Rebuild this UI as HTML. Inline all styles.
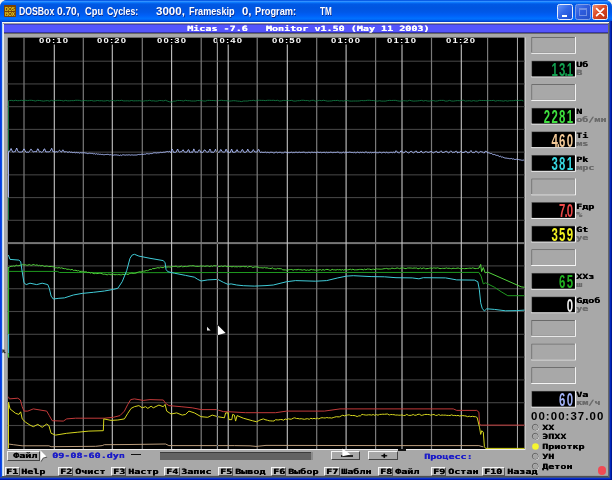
<!DOCTYPE html>
<html lang="ru"><head><meta charset="utf-8"><title>DOSBox 0.70 - TM</title>
<style>
html,body{margin:0;padding:0;}
html{background:#f4f3ee;}
body{width:612px;height:480px;position:relative;overflow:hidden;font-family:"Liberation Sans",sans-serif;}
.abs{position:absolute;}
#win{will-change:transform;position:absolute;left:0;top:0;width:612px;height:480px;background:#0a48dc;border-radius:7px 7px 0 0;overflow:hidden;}
#tb{position:absolute;left:0;top:0;width:612px;height:22px;background:linear-gradient(to bottom,#0a5ce6 0%,#0a5ce6 2.3%,#3090ff 6.8%,#0c78fc 11.4%,#0462ec 16%,#0058e4 20.5%,#0055e0 36%,#0058e8 55%,#0060f8 70%,#0070ff 84%,#0068f8 88.6%,#0058e8 93.2%,#0040d0 97.7%,#0040d0 100%);}
#tb span{position:absolute;top:4.1px;color:#fff;font-weight:bold;font-size:11.2px;line-height:14px;white-space:pre;text-shadow:0.7px 0.7px 0 #0a2a8a;transform-origin:0 0;}
#icon{position:absolute;left:4.2px;top:5.3px;width:11.6px;height:11.6px;background:#7a4204;border-radius:0.8px;overflow:hidden;}
#icon i{position:absolute;left:0.9px;width:14px;height:5px;font:bold 6.2px/5px "Liberation Sans",sans-serif;color:#ecd620;text-align:left;letter-spacing:-0.2px;font-style:normal;transform-origin:0 0;transform:scaleX(0.76);}
.cb{position:absolute;top:4px;width:16px;height:16px;border-radius:2.4px;box-sizing:border-box;border:0.9px solid #e8eefc;}
#bmin{left:557px;background:linear-gradient(135deg,#6a98f8 0%,#3468e8 45%,#1c4cd0 100%);}
#bmax{left:575px;background:linear-gradient(135deg,#4a7cec 0%,#2e5cdc 45%,#2450c8 100%);border-color:#7f9fe8;}
#bcls{left:592px;background:linear-gradient(135deg,#f09070 0%,#dc4a24 45%,#b83010 100%);}
.ln{position:absolute;}
#client{position:absolute;left:4px;top:24px;width:604px;height:452px;background:#a8a8a8;}
#hdr{position:absolute;left:4px;top:24px;width:604px;height:9px;background:#5454fc;box-sizing:border-box;border-top:1px solid #4040b8;border-bottom:1px solid #3434a4;}
#graph{position:absolute;left:0;top:0;}
.f8{position:absolute;font-family:"DejaVu Sans Mono","Liberation Mono",monospace;font-weight:bold;font-size:7.3px;line-height:11px;white-space:pre;transform-origin:0 0;transform:scaleX(1.379);letter-spacing:0;text-shadow:0.3px 0 0 currentColor;}
.bx{position:absolute;left:531.5px;width:44.2px;height:16.3px;}
.seg{position:absolute;right:1.4px;top:2.2px;font-family:"Liberation Sans",sans-serif;font-weight:bold;font-size:11.4px;line-height:14px;letter-spacing:1.3px;transform-origin:100% 50%;transform:scale(1,1.62);white-space:pre;}
.seg .dp{display:inline-block;width:0;margin-left:-2.25px;margin-right:2.25px;letter-spacing:0;}
.timer{position:absolute;font-family:"Liberation Sans",sans-serif;font-weight:bold;font-size:10.4px;line-height:14px;color:#000;white-space:pre;transform-origin:0 0;transform:scaleX(1.1);letter-spacing:0.97px;}
.rd{position:absolute;width:6.4px;height:6.4px;border-radius:50%;box-sizing:border-box;background:#a4a4a4;border:0.9px solid #555;border-right-color:#eee;border-bottom-color:#eee;}
.rd.on{background:#f4f430;border-color:#d8d840;}
.reddot{position:absolute;left:598px;top:466.2px;width:8.4px;height:8.4px;border-radius:50%;background:#f04a54;}
.btn{position:absolute;box-sizing:border-box;background:#a8a8a8;border-top:1.1px solid #f4f4f4;border-left:1.1px solid #f4f4f4;border-bottom:1.3px solid #444;border-right:1.3px solid #444;}
.key{position:absolute;top:467px;height:9px;box-sizing:border-box;background:#b4b4b4;border-top:1.1px solid #f6f6f6;border-left:1.1px solid #f6f6f6;border-bottom:1.2px solid #555;border-right:1.2px solid #555;}
.sb{position:absolute;left:160px;top:452px;width:151.4px;height:7.6px;background:#626262;border-top:0.9px solid #3c3c3c;box-sizing:border-box;}
.sbe{position:absolute;left:311.4px;top:452px;width:2px;height:7.6px;background:#8c8c8c;}
.hd{position:absolute;top:23.2px;color:#fff;}
.tl{position:absolute;color:#fff;font-family:"Liberation Sans",sans-serif;font-weight:bold;font-size:7.6px;line-height:11px;white-space:pre;transform-origin:0 0;transform:scaleX(1.25);letter-spacing:0.958px;}
</style></head><body>
<div id="win">
<div id="tb">
<div id="icon"><i style="top:1.0px">DOS</i><i style="top:5.9px">BOX</i></div>
<span style="left:19px;transform:scaleX(0.776)" id="t1">DOSBox</span><span style="left:57.4px;transform:scaleX(0.908)" id="t2">0.70,</span><span style="left:85.3px;transform:scaleX(0.832)" id="t3">Cpu</span><span style="left:107.4px;transform:scaleX(0.785)" id="t4">Cycles:</span><span style="left:155.9px;transform:scaleX(1.031)" id="t5">3000,</span><span style="left:189.1px;transform:scaleX(0.814)" id="t6">Frameskip</span><span style="left:241.5px;transform:scaleX(1.012)" id="t7">0,</span><span style="left:255.3px;transform:scaleX(0.828)" id="t8">Program:</span><span style="left:320px;transform:scaleX(0.728)" id="t9">TM</span>
<div class="cb" id="bmin"><div class="abs" style="left:3.6px;top:9.8px;width:5.6px;height:2.2px;background:#fff"></div></div>
<div class="cb" id="bmax"><div class="abs" style="left:3.2px;top:3.4px;width:8.2px;height:7.8px;box-sizing:border-box;border:1px solid #6f8fe6;border-top-width:2px"></div></div>
<div class="cb" id="bcls"><svg class="abs" style="left:0;top:0" width="14" height="14" viewBox="0 0 14 14"><path d="M3.6 3.6 L10.6 10.6 M10.6 3.6 L3.6 10.6" stroke="#fff" stroke-width="1.7" stroke-linecap="round"/></svg></div>
</div>
<div class="ln" style="left:0;top:21px;width:1px;height:459px;background:#0a38e0"></div>
<div class="ln" style="left:1px;top:21px;width:1px;height:459px;background:#0a50e0"></div>
<div class="ln" style="left:2px;top:22px;width:1px;height:455px;background:#c0d4f4"></div>
<div class="ln" style="left:3px;top:22px;width:1px;height:455px;background:#ececec"></div>
<div class="ln" style="left:2px;top:22px;width:607px;height:1px;background:#f8f8f4"></div>
<div class="ln" style="left:3px;top:23px;width:606px;height:1px;background:#9c9ca2"></div>
<div id="client"></div>
<div class="ln" style="left:4px;top:33px;width:604px;height:1px;background:#6a6a66"></div>
<div class="ln" style="left:4px;top:475px;width:604px;height:1px;background:#9c9c9c"></div>
<div class="ln" style="left:2px;top:476px;width:607px;height:1px;background:#505050"></div>
<div class="ln" style="left:0px;top:477px;width:612px;height:1px;background:#3a5080"></div>
<div class="ln" style="left:0px;top:478px;width:612px;height:1px;background:#0a30d0"></div>
<div class="ln" style="left:0px;top:479px;width:612px;height:1px;background:#0018a0"></div>
<div class="ln" style="left:608px;top:23px;width:1px;height:454px;background:#686868"></div>
<div class="ln" style="left:609px;top:21px;width:1px;height:457px;background:#3a4c90"></div>
<div class="ln" style="left:610px;top:21px;width:1px;height:458px;background:#0028c0"></div>
<div class="ln" style="left:611px;top:21px;width:1px;height:459px;background:#001890"></div>
<div id="hdr"></div>
<span class="f8 hd" style="left:187px">Micas -7.6   Monitor v1.50 (May 11 2003)</span>
<svg id="graph" width="612" height="480" viewBox="0 0 612 480">
<rect x="7.7" y="37.5" width="517.6999999999999" height="412.4" fill="#f8f8f8"/>
<rect x="7.7" y="37.5" width="516.8499999999999" height="411.5" fill="#000"/>
<rect x="7.7" y="60.65" width="516.8499999999999" height="1.1" fill="#434343"/>
<rect x="7.7" y="83.38" width="516.8499999999999" height="1.1" fill="#434343"/>
<rect x="7.7" y="106.11" width="516.8499999999999" height="1.1" fill="#434343"/>
<rect x="7.7" y="128.84" width="516.8499999999999" height="1.1" fill="#434343"/>
<rect x="7.7" y="151.57" width="516.8499999999999" height="1.1" fill="#434343"/>
<rect x="7.7" y="174.30" width="516.8499999999999" height="1.1" fill="#434343"/>
<rect x="7.7" y="197.03" width="516.8499999999999" height="1.1" fill="#434343"/>
<rect x="7.7" y="219.76" width="516.8499999999999" height="1.1" fill="#434343"/>
<rect x="7.7" y="242.10" width="516.8499999999999" height="2" fill="#767676"/>
<rect x="7.7" y="265.35" width="516.8499999999999" height="1.1" fill="#434343"/>
<rect x="7.7" y="288.15" width="516.8499999999999" height="1.1" fill="#434343"/>
<rect x="7.7" y="310.95" width="516.8499999999999" height="1.1" fill="#434343"/>
<rect x="7.7" y="333.75" width="516.8499999999999" height="1.1" fill="#434343"/>
<rect x="7.7" y="356.55" width="516.8499999999999" height="1.1" fill="#434343"/>
<rect x="7.7" y="379.35" width="516.8499999999999" height="1.1" fill="#434343"/>
<rect x="7.7" y="402.15" width="516.8499999999999" height="1.1" fill="#434343"/>
<rect x="7.7" y="424.95" width="516.8499999999999" height="1.1" fill="#434343"/>
<rect x="23.40" y="37.5" width="1.2" height="411.5" fill="#7a7a7a"/>
<rect x="82.70" y="37.5" width="1.2" height="411.5" fill="#7a7a7a"/>
<rect x="141.70" y="37.5" width="1.2" height="411.5" fill="#7a7a7a"/>
<rect x="200.60" y="37.5" width="1.2" height="411.5" fill="#7a7a7a"/>
<rect x="256.60" y="37.5" width="1.2" height="411.5" fill="#7a7a7a"/>
<rect x="316.10" y="37.5" width="1.2" height="411.5" fill="#7a7a7a"/>
<rect x="375.00" y="37.5" width="1.2" height="411.5" fill="#7a7a7a"/>
<rect x="430.90" y="37.5" width="1.2" height="411.5" fill="#7a7a7a"/>
<rect x="487.00" y="37.5" width="1.2" height="411.5" fill="#7a7a7a"/>
<rect x="53.75" y="44.5" width="1.1" height="404.5" fill="#c4c4c4"/>
<rect x="111.75" y="44.5" width="1.1" height="404.5" fill="#c4c4c4"/>
<rect x="171.05" y="44.5" width="1.1" height="404.5" fill="#c4c4c4"/>
<rect x="227.65" y="44.5" width="1.1" height="404.5" fill="#c4c4c4"/>
<rect x="286.75" y="44.5" width="1.1" height="404.5" fill="#c4c4c4"/>
<rect x="345.55" y="44.5" width="1.1" height="404.5" fill="#c4c4c4"/>
<rect x="401.45" y="44.5" width="1.1" height="404.5" fill="#c4c4c4"/>
<rect x="460.75" y="44.5" width="1.1" height="404.5" fill="#c4c4c4"/>
<rect x="516.95" y="37.5" width="0.9" height="411.5" fill="#c0c0c0"/>
<polyline points="8.5,220.0 8.5,100.7 9.5,100.5 11.5,100.4 13.5,100.8 15.5,100.3 17.5,100.7 19.5,100.6 21.5,100.3 23.5,100.7 25.5,100.3 27.5,100.6 29.5,100.3 31.5,100.3 33.5,100.6 35.5,101.0 37.5,100.4 39.5,100.5 41.5,100.8 43.5,101.1 45.5,100.8 47.5,100.6 49.5,101.1 51.5,100.3 53.5,101.0 55.5,100.5 57.5,100.4 59.5,100.4 61.5,100.5 63.5,101.0 65.5,100.4 67.5,100.8 69.5,100.8 71.5,100.6 73.5,100.7 75.5,100.3 77.5,100.3 79.5,100.4 81.5,100.9 83.5,100.6 85.5,100.5 87.5,100.8 89.5,100.7 91.5,100.5 93.5,101.0 95.5,100.9 97.5,100.5 99.5,100.8 101.5,100.7 103.5,101.0 105.5,100.9 107.5,100.5 109.5,101.1 111.5,100.4 113.5,100.6 115.5,100.9 117.5,100.4 119.5,100.7 121.5,100.3 123.5,100.9 125.5,100.9 127.5,100.8 129.5,101.0 131.5,100.5 133.5,100.9 135.5,100.8 137.5,100.8 139.5,100.7 141.5,101.0 143.5,101.1 145.5,100.7 147.5,100.8 149.5,100.3 151.5,100.9 153.5,100.8 155.5,101.1 157.5,101.0 159.5,100.5 161.5,100.6 163.5,100.9 165.5,100.3 167.5,101.1 169.5,101.8 171.5,102.1 173.5,101.2 175.5,101.1 177.5,100.4 179.5,100.5 181.5,100.6 183.5,101.0 185.5,100.3 187.5,100.7 189.5,100.7 191.5,101.0 193.5,101.0 195.5,101.0 197.5,100.5 199.5,100.6 201.5,100.6 203.5,101.0 205.5,101.1 207.5,100.4 209.5,100.4 211.5,100.5 213.5,100.5 215.5,100.7 217.5,100.8 219.5,100.5 221.5,100.3 223.5,100.6 225.5,100.6 227.5,100.8 229.5,101.1 231.5,100.9 233.5,100.7 235.5,100.8 237.5,101.1 239.5,101.2 241.5,101.6 243.5,101.0 245.5,101.0 247.5,101.0 249.5,100.6 251.5,100.6 253.5,100.3 255.5,100.8 257.5,100.3 259.5,100.3 261.5,100.4 263.5,100.4 265.5,100.6 267.5,100.3 269.5,100.3 271.5,100.4 273.5,100.3 275.5,100.6 277.5,100.3 279.5,101.0 281.5,100.8 283.5,100.4 285.5,100.5 287.5,100.6 289.5,100.6 291.5,100.4 293.5,101.0 295.5,101.1 297.5,100.7 299.5,100.7 301.5,100.3 303.5,100.3 305.5,100.6 307.5,100.5 309.5,101.0 311.5,100.4 313.5,100.3 315.5,101.1 317.5,100.7 319.5,100.4 321.5,100.7 323.5,100.3 325.5,100.7 327.5,101.1 329.5,101.0 331.5,100.9 333.5,100.5 335.5,100.6 337.5,100.4 339.5,100.9 341.5,100.7 343.5,101.0 345.5,100.5 347.5,100.5 349.5,101.0 351.5,101.1 353.5,101.0 355.5,101.0 357.5,101.0 359.5,100.9 361.5,100.5 363.5,100.7 365.5,100.6 367.5,100.3 369.5,100.3 371.5,100.5 373.5,100.5 375.5,100.9 377.5,101.1 379.5,100.7 381.5,101.1 383.5,101.1 385.5,101.1 387.5,100.6 389.5,100.4 391.5,100.5 393.5,100.4 395.5,100.4 397.5,100.8 399.5,101.1 401.5,101.0 403.5,100.7 405.5,100.8 407.5,101.0 409.5,100.3 411.5,100.8 413.5,101.1 415.5,101.0 417.5,100.9 419.5,100.7 421.5,100.4 423.5,101.0 425.5,100.5 427.5,101.0 429.5,101.1 431.5,100.6 433.5,100.6 435.5,101.1 437.5,100.9 439.5,100.4 441.5,100.4 443.5,100.4 445.5,101.1 447.5,101.0 449.5,100.4 451.5,101.0 453.5,101.1 455.5,100.8 457.5,100.6 459.5,100.7 461.5,100.4 463.5,100.3 465.5,101.1 467.5,100.8 469.5,100.7 471.5,101.1 473.5,100.6 475.5,101.0 477.5,101.0 479.5,100.4 481.5,100.5 483.5,100.5 485.5,100.5 487.5,100.8 489.5,100.5 491.5,100.6 493.5,100.4 495.5,101.1 497.5,100.6 499.5,100.7 501.5,100.8 503.5,101.1 505.5,100.6 507.5,101.1 509.5,100.7 511.5,100.7 513.5,100.7 515.5,100.3 517.5,100.6 519.5,100.4 521.5,100.3 523.5,101.0" fill="none" stroke="#127a44" stroke-width="0.9" stroke-linejoin="round" opacity="1"/>
<polyline points="8.5,197.5 8.5,151.3 9.0,151.6 9.7,151.3 10.4,149.8 11.1,148.5 11.8,150.0 12.5,151.8 13.2,151.9 13.9,152.1 14.6,151.6 15.3,151.6 16.0,149.7 16.7,148.0 17.4,150.1 18.1,151.5 18.8,151.9 19.5,152.1 20.2,152.2 20.9,151.9 21.6,152.0 22.3,151.9 23.0,150.6 23.7,149.1 24.4,149.1 25.1,150.8 25.8,151.9 26.5,152.3 27.2,152.1 27.9,152.2 28.6,152.3 29.3,151.7 30.0,150.6 30.7,149.3 31.4,149.4 32.1,150.5 32.8,151.6 33.5,151.9 34.2,151.6 34.9,151.7 35.6,151.6 36.3,151.9 37.0,150.3 37.7,148.8 38.4,149.3 39.1,151.5 39.8,152.0 40.5,151.6 41.2,152.2 41.9,152.3 42.6,151.7 43.3,151.2 44.0,149.1 44.7,148.9 45.4,151.0 46.1,152.2 46.8,151.6 47.5,151.8 48.2,151.9 48.9,151.8 49.6,151.7 50.3,150.9 51.0,149.6 51.7,148.3 52.4,150.4 53.1,151.9 53.8,151.5 54.5,151.8 55.2,152.0 55.9,151.9 56.6,151.6 57.3,152.3 58.0,151.5 58.7,150.8 59.4,150.2 60.1,151.2 60.8,151.5 61.5,152.1 62.2,150.8 62.9,149.8 63.6,150.7 64.3,152.0 65.0,152.2 65.7,151.7 66.4,151.6 67.1,152.3 67.8,152.1 68.5,152.2 69.2,151.8 69.9,151.8 70.6,152.4 71.3,152.2 72.0,152.0 72.7,152.7 73.4,152.5 74.1,152.7 74.8,152.2 75.5,152.8 76.2,152.2 76.9,152.9 77.6,152.7 78.3,152.6 79.0,152.8 79.7,153.2 80.4,152.7 81.1,152.6 81.8,153.0 82.5,152.8 83.2,152.8 83.9,152.8 84.6,152.8 85.3,153.0 86.0,153.1 86.7,153.2 87.4,153.6 88.1,153.2 88.8,153.5 89.5,153.2 90.2,153.4 90.9,153.2 91.6,153.4 92.3,153.3 93.0,153.9 93.7,153.8 94.4,153.6 95.1,153.9 95.8,154.3 96.5,153.7 97.2,154.3 97.9,154.0 98.6,154.1 99.3,154.4 100.0,154.1 100.7,154.3 101.4,154.5 102.1,154.7 102.8,154.3 103.5,154.7 104.2,154.7 104.9,154.7 105.6,154.5 106.3,154.5 107.0,154.3 107.7,154.4 108.4,154.4 109.1,155.0 109.8,154.7 110.5,154.7 111.2,154.6 111.9,155.3 112.6,155.4 113.3,155.2 114.0,154.9 114.7,154.9 115.4,154.9 116.1,155.1 116.8,154.8 117.5,155.1 118.2,154.9 118.9,155.5 119.6,155.5 120.3,155.1 121.0,154.9 121.7,155.5 122.4,154.9 123.1,155.0 123.8,154.7 124.5,155.0 125.2,155.1 125.9,155.1 126.6,154.9 127.3,155.1 128.0,154.7 128.7,154.9 129.4,154.8 130.1,155.3 130.8,155.0 131.5,154.9 132.2,155.0 132.9,154.9 133.6,155.1 134.3,155.0 135.0,155.1 135.7,155.0 136.4,155.0 137.1,155.0 137.8,154.6 138.5,154.5 139.2,154.9 139.9,154.2 140.6,154.6 141.3,154.4 142.0,153.9 142.7,154.5 143.4,154.4 144.1,154.2 144.8,154.2 145.5,154.2 146.2,153.6 146.9,153.8 147.6,153.7 148.3,153.9 149.0,153.8 149.7,153.8 150.4,153.5 151.1,153.7 151.8,153.5 152.5,153.4 153.2,153.0 153.9,152.8 154.6,152.8 155.3,152.9 156.0,152.6 156.7,153.1 157.4,152.8 158.1,152.8 158.8,152.8 159.5,152.7 160.2,152.5 160.9,152.1 161.6,152.6 162.3,152.5 163.0,152.3 163.7,152.2 164.4,152.3 165.1,151.7 165.8,152.2 166.5,151.7 167.2,151.5 167.9,151.6 168.6,151.9 169.3,151.4 170.0,151.8 170.7,152.6 171.4,150.9 172.1,149.1 172.8,150.4 173.5,152.3 174.2,152.4 174.9,152.3 175.6,152.3 176.3,151.9 177.0,150.1 177.7,149.0 178.4,151.1 179.1,152.0 179.8,152.3 180.5,151.8 181.2,151.8 181.9,151.5 182.6,150.1 183.3,149.8 184.0,151.6 184.7,152.0 185.4,152.2 186.1,152.2 186.8,152.2 187.5,150.9 188.2,149.7 188.9,149.9 189.6,152.3 190.3,152.5 191.0,151.8 191.7,152.2 192.4,152.5 193.1,151.1 193.8,148.9 194.5,150.5 195.2,152.0 195.9,152.6 196.6,152.0 197.3,152.3 198.0,151.7 198.7,150.2 199.4,149.8 200.1,150.9 200.8,152.5 201.5,152.2 202.2,152.5 202.9,152.4 203.6,151.2 204.3,150.0 205.0,149.9 205.7,151.3 206.4,151.8 207.1,152.2 207.8,152.2 208.5,152.0 209.2,150.6 209.9,149.0 210.6,150.3 211.3,152.5 212.0,151.8 212.7,152.4 213.4,152.5 214.1,151.9 214.8,150.8 215.5,149.3 216.2,151.3 216.9,152.0 217.6,152.1 218.3,152.1 219.0,152.6 219.7,151.8 220.4,149.8 221.1,149.6 221.8,151.3 222.5,151.8 223.2,151.9 223.9,152.5 224.6,152.0 225.3,151.5 226.0,149.2 226.7,150.0 227.4,152.0 228.1,152.0 228.8,152.1 229.5,152.6 230.2,152.5 230.9,150.9 231.6,149.0 232.3,151.0 233.0,152.6 233.7,152.2 234.4,152.4 235.1,151.8 235.8,152.1 236.5,150.1 237.2,149.6 237.9,151.3 238.6,152.0 239.3,151.8 240.0,152.5 240.7,151.9 241.4,151.4 242.1,149.5 242.8,149.8 243.5,151.9 244.2,152.6 244.9,152.0 245.6,152.3 246.3,152.0 247.0,151.0 247.7,149.1 248.4,150.2 249.1,151.9 249.8,152.0 250.5,152.5 251.2,152.2 251.9,152.0 252.6,150.7 253.3,149.6 254.0,150.9 254.7,151.9 255.4,152.0 256.1,151.9 256.8,152.1 257.5,151.4 258.2,149.7 258.9,149.5 259.6,151.5 260.3,152.5 261.0,152.4 261.7,152.1 262.4,152.4 263.1,152.5 263.8,152.4 264.5,152.4 265.2,152.1 265.9,152.3 266.6,152.9 267.3,152.2 268.0,152.5 268.7,152.6 269.4,152.8 270.1,152.3 270.8,152.3 271.5,152.3 272.2,152.4 272.9,152.5 273.6,152.9 274.3,152.8 275.0,152.8 275.7,152.1 276.4,152.1 277.1,152.7 277.8,152.8 278.5,152.5 279.2,152.6 279.9,152.1 280.6,152.4 281.3,152.8 282.0,152.8 282.7,152.8 283.4,152.9 284.1,152.3 284.8,152.2 285.5,152.2 286.2,152.5 286.9,152.6 287.6,152.9 288.3,152.7 289.0,152.6 289.7,152.7 290.4,152.5 291.1,152.5 291.8,152.1 292.5,152.7 293.2,152.3 293.9,152.8 294.6,152.6 295.3,152.3 296.0,152.2 296.7,152.3 297.4,152.6 298.1,152.7 298.8,152.2 299.5,152.2 300.2,152.5 300.9,152.6 301.6,152.4 302.3,152.3 303.0,152.6 303.7,152.1 304.4,152.3 305.1,152.5 305.8,152.9 306.5,152.6 307.2,152.8 307.9,152.5 308.6,152.3 309.3,152.3 310.0,152.9 310.7,152.7 311.4,152.3 312.1,152.1 312.8,152.5 313.5,152.6 314.2,152.4 314.9,152.3 315.6,152.6 316.3,152.8 317.0,152.3 317.7,152.1 318.4,152.4 319.1,152.4 319.8,152.6 320.5,152.3 321.2,152.7 321.9,152.7 322.6,152.5 323.3,152.3 324.0,152.9 324.7,152.3 325.4,152.8 326.1,152.3 326.8,152.3 327.5,152.7 328.2,152.3 328.9,152.9 329.6,152.5 330.3,152.2 331.0,152.3 331.7,152.4 332.4,152.6 333.1,152.9 333.8,152.2 334.5,152.4 335.2,152.3 335.9,152.9 336.6,152.2 337.3,152.1 338.0,152.1 338.7,152.4 339.4,152.8 340.1,152.8 340.8,152.7 341.5,152.9 342.2,152.8 342.9,152.4 343.6,152.2 344.3,152.8 345.0,152.7 345.7,152.1 346.4,152.6 347.1,152.4 347.8,152.4 348.5,152.4 349.2,152.2 349.9,152.1 350.6,152.3 351.3,152.4 352.0,152.9 352.7,152.2 353.4,152.9 354.1,152.3 354.8,152.4 355.5,152.8 356.2,152.8 356.9,152.4 357.6,152.1 358.3,152.5 359.0,152.4 359.7,152.8 360.4,152.3 361.1,152.4 361.8,152.8 362.5,152.1 363.2,152.4 363.9,152.7 364.6,152.7 365.3,152.1 366.0,152.1 366.7,152.2 367.4,152.8 368.1,152.3 368.8,152.7 369.5,152.8 370.2,152.4 370.9,152.3 371.6,152.9 372.3,152.6 373.0,152.3 373.7,152.7 374.4,152.4 375.1,152.3 375.8,152.1 376.5,152.7 377.2,152.8 377.9,152.6 378.6,152.9 379.3,152.1 380.0,152.3 380.7,152.5 381.4,152.9 382.1,152.9 382.8,152.4 383.5,152.3 384.2,152.4 384.9,152.5 385.6,152.8 386.3,152.2 387.0,152.7 387.7,152.7 388.4,152.8 389.1,152.7 389.8,152.6 390.5,152.4 391.2,152.4 391.9,152.4 392.6,152.7 393.3,152.2 394.0,152.3 394.7,152.7 395.4,152.3 396.1,150.7 396.8,151.4 397.5,152.5 398.2,152.5 398.9,153.0 399.6,152.7 400.3,152.0 401.0,150.7 401.7,151.3 402.4,152.1 403.1,152.6 403.8,152.8 404.5,152.5 405.2,151.5 405.9,150.9 406.6,151.6 407.3,152.4 408.0,152.8 408.7,152.9 409.4,152.7 410.1,151.6 410.8,151.4 411.5,151.3 412.2,152.2 412.9,152.5 413.6,152.8 414.3,152.4 415.0,151.8 415.7,151.0 416.4,151.0 417.1,152.4 417.8,152.7 418.5,152.5 419.2,152.5 419.9,152.5 420.6,151.3 421.3,151.0 422.0,152.2 422.7,152.7 423.4,153.0 424.1,152.3 424.8,152.2 425.5,151.7 426.2,151.4 426.9,152.2 427.6,152.2 428.3,152.4 429.0,152.3 429.7,152.0 430.4,151.9 431.1,151.1 431.8,152.1 432.5,152.4 433.2,152.9 433.9,152.6 434.6,152.2 435.3,151.9 436.0,151.3 436.7,151.3 437.4,152.5 438.1,152.7 438.8,152.4 439.5,152.4 440.2,151.5 440.9,150.8 441.6,151.3 442.3,152.4 443.0,152.7 443.7,152.4 444.4,152.2 445.1,151.7 445.8,151.3 446.5,151.2 447.2,152.0 447.9,152.4 448.6,152.8 449.3,152.6 450.0,151.6 450.7,150.9 451.4,151.2 452.1,152.1 452.8,152.7 453.5,152.3 454.2,152.3 454.9,152.2 455.6,151.3 456.3,151.0 457.0,151.8 457.7,153.0 458.4,152.4 459.1,152.7 459.8,152.1 460.5,151.4 461.2,151.4 461.9,152.3 462.6,152.5 463.3,152.4 464.0,152.8 464.7,152.0 465.4,151.1 466.1,151.3 466.8,151.7 467.5,152.8 468.2,152.5 468.9,152.9 469.6,152.4 470.3,151.4 471.0,150.5 471.7,151.7 472.4,152.5 473.1,152.9 473.8,152.3 474.5,152.6 475.2,151.6 475.9,151.0 476.6,151.3 477.3,152.1 478.0,152.6 478.7,152.9 479.4,152.3 480.1,151.8 480.8,151.4 481.5,151.8 482.2,151.9 482.9,152.3 483.6,153.0 484.3,153.0 485.0,151.9 485.7,150.9 486.4,151.7 487.1,152.0 487.8,152.9 488.5,152.8 489.2,153.2 489.9,152.9 490.6,153.6 491.3,153.4 492.0,153.8 492.7,154.4 493.4,154.6 494.1,154.3 494.8,154.6 495.5,155.0 496.2,155.3 496.9,155.4 497.6,155.4 498.3,155.7 499.0,156.3 499.7,156.6 500.4,156.2 501.1,156.8 501.8,157.2 502.5,156.8 503.2,157.6 503.9,157.3 504.6,157.9 505.3,158.0 506.0,158.3 506.7,158.1 507.4,158.3 508.1,158.5 508.8,158.4 509.5,158.7 510.2,158.6 510.9,158.7 511.6,158.5 512.3,159.0 513.0,159.0 513.7,158.9 514.4,159.4 515.1,159.5 515.8,159.4 516.5,159.2 517.2,159.6 517.9,159.4 518.6,159.5 519.3,159.8 520.0,159.6 520.7,160.0 521.4,160.2 522.1,159.9 522.8,160.5 523.5,160.1 524.2,160.7" fill="none" stroke="#a6b6f2" stroke-width="1.0" stroke-linejoin="round" opacity="1"/>
<rect x="7.9" y="267" width="1.2" height="67" fill="#30b030"/>
<rect x="7.9" y="334" width="1.2" height="19.2" fill="#40c0d0"/>
<rect x="7.9" y="353.2" width="1.2" height="4.4" fill="#40c040"/>
<polyline points="8.5,271.4 57.5,271.4 59.5,272.5 130.0,272.7 250.0,272.5 478.9,272.4 481.1,276.1 483.3,283.9 485.6,282.8 494.4,287.2 501.1,291.7 507.8,295.7 524.5,295.7" fill="none" stroke="#1f9a1f" stroke-width="1.0" stroke-linejoin="round" opacity="1"/>
<polyline points="8.4,267.5 9.7,266.9 11.0,266.2 12.3,266.3 13.6,265.9 14.9,266.3 16.2,265.2 17.5,265.7 18.8,265.7 20.1,265.2 21.4,265.0 22.7,264.3 24.0,265.1 25.3,264.7 26.6,265.2 27.9,265.2 29.2,264.5 30.5,265.1 31.8,265.3 33.1,264.5 34.4,264.8 35.7,265.3 37.0,264.8 38.3,265.7 39.6,265.3 40.9,266.0 42.2,265.4 43.5,266.0 44.8,266.5 46.1,266.0 47.4,266.2 48.7,266.6 50.0,266.5 51.3,266.4 52.6,266.7 53.9,266.8 55.2,267.8 56.5,267.7 57.8,268.0 59.1,267.5 60.4,268.2 61.7,267.8 63.0,268.4 64.3,268.7 65.6,268.6 66.9,269.3 68.2,269.2 69.5,269.4 70.8,269.9 72.1,269.3 73.4,270.4 74.7,270.3 76.0,270.3 77.3,270.9 78.6,270.6 79.9,271.5 81.2,271.3 82.5,271.4 83.8,272.0 85.1,271.9 86.4,271.8 87.7,272.6 89.0,272.2 90.3,273.1 91.6,272.6 92.9,273.2 94.2,273.7 95.5,273.4 96.8,273.6 98.1,273.4 99.4,273.3 100.7,273.4 102.0,273.7 103.3,274.3 104.6,274.2 105.9,274.4 107.2,274.9 108.5,274.2 109.8,274.4 111.1,274.9 112.4,274.3 113.7,274.4 115.0,274.8 116.3,274.6 117.6,274.7 118.9,274.5 120.2,274.8 121.5,274.8 122.8,274.3 124.1,274.7 125.4,274.4 126.7,274.0 128.0,274.6 129.3,273.7 130.6,273.4 131.9,273.1 133.2,273.4 134.5,273.4 135.8,273.1 137.1,272.5 138.4,272.1 139.7,271.7 141.0,272.1 142.3,271.6 143.6,271.1 144.9,271.1 146.2,270.5 147.5,270.7 148.8,270.1 150.1,269.3 151.4,269.6 152.7,268.5 154.0,268.7 155.3,268.4 156.6,268.0 157.9,267.6 159.2,268.1 160.5,267.2 161.8,267.5 163.1,267.7 164.4,266.8 165.7,266.8 167.0,267.1 168.3,266.9 169.6,267.0 170.9,267.1 172.2,266.4 173.5,266.5 174.8,266.4 176.1,266.1 177.4,266.9 178.7,266.8 180.0,266.7 181.3,266.0 182.6,266.8 183.9,266.6 185.2,266.3 186.5,266.6 187.8,266.3 189.1,266.0 190.4,265.8 191.7,265.9 193.0,265.7 194.3,266.0 195.6,266.4 196.9,266.3 198.2,266.4 199.5,266.3 200.8,265.9 202.1,266.2 203.4,266.0 204.7,266.4 206.0,266.1 207.3,265.9 208.6,266.2 209.9,266.6 211.2,265.8 212.5,266.5 213.8,265.6 215.1,265.9 216.4,265.8 217.7,266.3 219.0,266.5 220.3,266.4 221.6,266.0 222.9,266.6 224.2,266.0 225.5,266.0 226.8,266.7 228.1,266.4 229.4,266.5 230.7,266.5 232.0,266.9 233.3,266.4 234.6,266.8 235.9,266.7 237.2,266.9 238.5,266.5 239.8,266.8 241.1,266.7 242.4,266.5 243.7,266.4 245.0,266.9 246.3,266.4 247.6,267.3 248.9,266.6 250.2,266.5 251.5,266.7 252.8,267.6 254.1,267.0 255.4,266.9 256.7,266.9 258.0,267.0 259.3,267.7 260.6,267.7 261.9,267.8 263.2,268.0 264.5,267.4 265.8,268.0 267.1,267.8 268.4,268.3 269.7,268.4 271.0,268.6 272.3,267.8 273.6,268.7 274.9,268.9 276.2,269.1 277.5,268.4 278.8,268.7 280.1,268.7 281.4,268.8 282.7,269.8 284.0,269.9 285.3,269.9 286.6,270.2 287.9,270.0 289.2,269.7 290.5,269.5 291.8,269.5 293.1,270.2 294.4,269.6 295.7,269.7 297.0,269.8 298.3,269.4 299.6,269.7 300.9,269.7 302.2,270.1 303.5,269.8 304.8,269.7 306.1,270.4 307.4,269.9 308.7,270.3 310.0,270.0 311.3,269.4 312.6,269.8 313.9,269.8 315.2,270.2 316.5,269.7 317.8,270.1 319.1,269.9 320.4,269.6 321.7,270.3 323.0,269.5 324.3,270.2 325.6,269.6 326.9,269.4 328.2,269.6 329.5,270.1 330.8,270.3 332.1,269.3 333.4,269.8 334.7,269.8 336.0,270.1 337.3,269.5 338.6,269.8 339.9,269.6 341.2,270.1 342.5,269.5 343.8,270.2 345.1,269.5 346.4,269.4 347.7,269.9 349.0,269.6 350.3,269.2 351.6,269.8 352.9,269.2 354.2,269.9 355.5,269.8 356.8,269.8 358.1,269.7 359.4,269.4 360.7,269.4 362.0,269.4 363.3,269.9 364.6,269.1 365.9,269.8 367.2,269.0 368.5,269.1 369.8,269.2 371.1,269.8 372.4,269.3 373.7,269.2 375.0,269.6 376.3,268.9 377.6,269.1 378.9,269.1 380.2,269.2 381.5,269.2 382.8,269.0 384.1,268.7 385.4,268.6 386.7,268.4 388.0,269.0 389.3,268.8 390.6,268.8 391.9,268.1 393.2,268.4 394.5,268.6 395.8,268.4 397.1,267.9 398.4,268.3 399.7,268.7 401.0,268.0 402.3,268.0 403.6,268.1 404.9,268.5 406.2,268.6 407.5,268.0 408.8,268.0 410.1,268.0 411.4,268.1 412.7,268.3 414.0,268.0 415.3,268.1 416.6,268.0 417.9,268.8 419.2,268.5 420.5,267.9 421.8,268.8 423.1,267.9 424.4,268.2 425.7,268.8 427.0,268.6 428.3,268.5 429.6,268.2 430.9,268.0 432.2,268.4 433.5,267.9 434.8,268.0 436.1,268.2 437.4,267.8 438.7,268.2 440.0,268.6 441.3,268.5 442.6,268.3 443.9,268.4 445.2,268.3 446.5,267.9 447.8,268.4 449.1,268.2 450.4,268.5 451.7,268.7 453.0,268.2 454.3,268.4 455.6,268.5 456.9,268.2 458.2,268.0 459.5,268.5 460.8,268.7 462.1,268.6 463.4,268.5 464.7,268.7 466.0,268.5 467.3,268.4 468.6,268.3 469.9,268.1 471.2,268.4 472.5,267.9 473.8,268.2 475.1,268.6 476.4,268.5 477.7,268.4 479.0,268.1 480.7,264.4 481.6,271.7 483.3,267.5 485.1,272.8 487.8,272.1 521.1,286.8 524.5,287.3" fill="none" stroke="#52d23c" stroke-width="1.0" stroke-linejoin="round" opacity="1"/>
<polyline points="8.4,255.0 10.0,259.4 18.9,260.1 20.7,261.7 22.2,271.7 24.0,282.8 26.2,284.6 30.0,283.2 36.7,284.6 42.2,283.2 47.8,284.6 49.3,288.3 51.1,296.1 53.3,299.0 58.9,298.3 64.4,297.9 73.3,295.0 82.2,293.4 93.3,292.3 104.4,291.0 113.3,289.4 117.8,288.3 122.2,281.7 126.7,270.6 130.0,258.3 132.2,255.0 134.5,254.3 138.9,256.1 150.0,258.3 163.3,260.6 165.1,262.8 166.0,269.4 167.8,271.7 174.4,273.2 185.6,275.4 194.4,277.2 197.8,279.4 201.1,281.0 207.8,279.9 217.8,279.4 223.3,282.3 227.8,284.3 231.1,283.9 236.7,285.0 243.3,285.7 254.4,286.1 266.0,285.6 273.3,285.0 286.7,281.7 295.6,280.6 315.6,281.2 326.7,280.6 337.8,277.9 346.7,276.1 353.3,275.7 371.1,276.6 384.4,276.8 396.0,277.7 412.2,277.9 418.9,278.8 423.3,277.7 445.6,277.9 456.7,279.9 474.4,280.1 477.8,281.7 479.3,289.4 480.7,302.8 482.2,308.3 484.4,311.0 486.7,308.8 494.4,309.4 505.6,310.8 516.7,310.6 524.5,310.1" fill="none" stroke="#40ccd8" stroke-width="1.0" stroke-linejoin="round" opacity="1"/>
<polyline points="8.4,396.7 9.3,398.9 17.8,398.2 20.4,400.0 22.2,406.7 24.0,411.1 27.8,411.1 33.3,408.9 40.0,410.0 46.7,411.1 49.3,415.6 52.2,420.7 63.3,421.1 66.7,418.9 75.6,418.2 104.4,418.2 113.3,417.3 120.0,415.6 124.4,411.1 127.8,404.4 130.7,399.6 134.4,398.9 143.3,400.4 150.0,399.6 163.3,400.0 165.6,403.3 168.9,405.6 181.1,406.7 192.2,407.8 201.1,409.6 216.7,409.6 223.3,411.6 230.0,411.8 245.6,412.7 275.6,412.7 286.7,411.1 324.4,411.1 340.0,408.9 453.3,408.9 456.7,410.4 476.7,410.4 478.9,412.2 479.6,424.4 481.1,425.1 524.5,425.1" fill="none" stroke="#c23a3a" stroke-width="1.0" stroke-linejoin="round" opacity="1"/>
<polyline points="8.5,448.5 8.5,402.2 10.0,408.9 15.6,413.3 18.9,414.4 20.7,411.8 22.2,418.9 25.6,422.2 30.0,425.1 33.3,426.7 37.8,424.4 42.2,427.3 46.7,424.0 48.9,425.6 51.1,433.3 55.6,435.1 66.7,433.3 77.8,432.2 88.9,431.1 103.3,430.7 103.8,418.9 111.1,420.4 117.8,420.0 124.4,418.9 127.8,413.3 131.1,408.4 134.4,406.7 138.9,405.6 142.2,407.8 145.6,406.7 147.8,408.4 151.1,406.2 153.3,407.8 158.9,405.1 163.3,406.7 165.1,404.4 166.7,411.1 171.1,414.0 176.7,412.9 182.2,415.1 185.6,414.4 188.9,411.1 194.4,412.9 201.1,416.7 207.8,417.3 212.2,415.1 217.8,416.7 224.4,417.8 225.6,412.9 228.2,412.9 228.9,419.6 231.8,419.6 232.7,414.4 234.4,415.1 235.6,421.1 237.1,415.6 243.3,418.2 252.2,420.7 256.7,421.8 260.0,420.0 263.3,418.9 266.0,420.0 266.0,419.9 267.6,420.3 269.2,420.8 270.8,420.9 272.4,421.0 274.0,421.0 275.6,419.7 277.2,419.9 278.8,419.9 280.4,419.5 282.0,419.6 283.6,420.2 285.2,419.0 286.8,419.6 288.4,418.8 290.0,419.2 291.6,419.1 293.2,418.2 294.8,417.8 296.4,418.5 298.0,418.5 299.6,418.9 301.2,418.7 302.8,419.0 304.4,419.3 306.0,418.9 307.6,418.7 309.2,419.3 310.8,418.3 312.4,418.8 314.0,418.4 315.6,418.8 317.2,418.0 318.8,418.9 320.4,418.1 322.0,417.7 323.6,417.9 325.2,418.0 326.8,417.5 328.4,417.9 330.0,417.8 331.6,418.1 333.2,417.6 334.8,417.1 336.4,416.7 338.0,416.9 339.6,416.8 341.2,415.9 342.8,415.2 344.4,415.9 346.0,415.3 347.6,415.0 349.2,414.8 350.8,415.5 352.4,415.5 354.0,415.5 355.6,415.9 357.2,416.6 358.8,415.8 360.4,415.9 362.0,414.3 363.6,414.7 365.2,415.0 366.8,415.1 368.4,414.8 370.0,414.8 371.6,415.1 373.2,414.5 374.8,415.3 376.4,414.6 378.0,415.2 379.6,414.4 381.2,414.4 382.8,414.2 384.4,414.3 386.0,414.1 387.6,414.0 389.2,415.0 390.8,414.5 392.4,414.6 394.0,414.7 395.6,415.1 397.2,415.0 398.8,415.2 400.4,415.2 402.0,414.9 403.6,415.5 405.2,415.4 406.8,414.4 408.4,415.3 410.0,415.4 411.6,415.2 413.2,414.5 414.8,415.3 416.4,415.1 418.0,414.3 419.6,414.3 421.2,415.4 422.8,415.1 424.4,414.6 426.0,414.4 427.6,414.5 429.2,414.6 430.8,415.2 432.4,414.7 434.0,414.5 435.6,415.4 437.2,415.3 438.8,414.5 440.4,415.4 442.0,415.0 443.6,415.2 445.2,415.1 446.8,415.4 448.4,415.4 450.0,415.5 451.6,414.8 453.2,415.5 454.8,415.4 456.4,415.7 458.0,415.4 459.6,416.0 461.2,415.7 462.8,415.6 464.4,415.8 466.0,416.0 467.6,416.7 469.2,416.2 470.8,416.7 472.4,416.3 474.0,416.7 475.6,416.7 477.2,417.6 479.6,427.8 480.7,434.4 481.8,430.7 483.3,432.2 484.4,446.7 485.6,448.4 524.5,448.4" fill="none" stroke="#d6d61e" stroke-width="1.0" stroke-linejoin="round" opacity="1"/>
<polyline points="8.4,444.0 13.3,444.7 22.2,445.8 48.9,445.8 51.1,446.7 95.6,446.3 102.2,445.6 104.4,444.7 130.0,444.5 165.6,444.0 168.9,445.6 234.4,445.6 250.0,445.8 256.0,446.4 266.0,445.4 396.0,445.6 478.9,445.6 483.3,446.9" fill="none" stroke="#c4a482" stroke-width="0.95" stroke-linejoin="round" opacity="1"/>
<polygon points="217.1,324.6 217.1,335.2 225.6,333" fill="#fff"/>
<polygon points="207,326.8 207,330.5 210.6,330.5" fill="#e8e8e8"/>
<path d="M2.3 349.3 L2.3 353.2 L3.3 352.2 L4.9 353.6 L5.8 352.6 L4.1 351.1 L5.2 349.9 Z" fill="#111" opacity="0.85"/>
<rect x="531.3" y="36.95" width="44.60" height="16.80" fill="#fafafa"/>
<rect x="531.3" y="36.95" width="43.60" height="15.80" fill="#585858"/>
<rect x="532.0999999999999" y="37.75" width="42.80" height="15.00" fill="#a8a8a8"/>
<rect x="531.3" y="60.54" width="44.60" height="16.80" fill="#fafafa"/>
<rect x="531.3" y="60.54" width="43.60" height="15.80" fill="#585858"/>
<rect x="532.0999999999999" y="61.34" width="42.80" height="15.00" fill="#000"/>
<rect x="531.3" y="84.12" width="44.60" height="16.80" fill="#fafafa"/>
<rect x="531.3" y="84.12" width="43.60" height="15.80" fill="#585858"/>
<rect x="532.0999999999999" y="84.92" width="42.80" height="15.00" fill="#a8a8a8"/>
<rect x="531.3" y="107.70" width="44.60" height="16.80" fill="#fafafa"/>
<rect x="531.3" y="107.70" width="43.60" height="15.80" fill="#585858"/>
<rect x="532.0999999999999" y="108.50" width="42.80" height="15.00" fill="#000"/>
<rect x="531.3" y="131.29" width="44.60" height="16.80" fill="#fafafa"/>
<rect x="531.3" y="131.29" width="43.60" height="15.80" fill="#585858"/>
<rect x="532.0999999999999" y="132.09" width="42.80" height="15.00" fill="#000"/>
<rect x="531.3" y="154.88" width="44.60" height="16.80" fill="#fafafa"/>
<rect x="531.3" y="154.88" width="43.60" height="15.80" fill="#585858"/>
<rect x="532.0999999999999" y="155.68" width="42.80" height="15.00" fill="#000"/>
<rect x="531.3" y="178.46" width="44.60" height="16.80" fill="#fafafa"/>
<rect x="531.3" y="178.46" width="43.60" height="15.80" fill="#585858"/>
<rect x="532.0999999999999" y="179.26" width="42.80" height="15.00" fill="#a8a8a8"/>
<rect x="531.3" y="202.04" width="44.60" height="16.80" fill="#fafafa"/>
<rect x="531.3" y="202.04" width="43.60" height="15.80" fill="#585858"/>
<rect x="532.0999999999999" y="202.84" width="42.80" height="15.00" fill="#000"/>
<rect x="531.3" y="225.63" width="44.60" height="16.80" fill="#fafafa"/>
<rect x="531.3" y="225.63" width="43.60" height="15.80" fill="#585858"/>
<rect x="532.0999999999999" y="226.43" width="42.80" height="15.00" fill="#000"/>
<rect x="531.3" y="249.22" width="44.60" height="16.80" fill="#fafafa"/>
<rect x="531.3" y="249.22" width="43.60" height="15.80" fill="#585858"/>
<rect x="532.0999999999999" y="250.02" width="42.80" height="15.00" fill="#a8a8a8"/>
<rect x="531.3" y="272.80" width="44.60" height="16.80" fill="#fafafa"/>
<rect x="531.3" y="272.80" width="43.60" height="15.80" fill="#585858"/>
<rect x="532.0999999999999" y="273.60" width="42.80" height="15.00" fill="#000"/>
<rect x="531.3" y="296.38" width="44.60" height="16.80" fill="#fafafa"/>
<rect x="531.3" y="296.38" width="43.60" height="15.80" fill="#585858"/>
<rect x="532.0999999999999" y="297.19" width="42.80" height="15.00" fill="#000"/>
<rect x="531.3" y="319.97" width="44.60" height="16.80" fill="#fafafa"/>
<rect x="531.3" y="319.97" width="43.60" height="15.80" fill="#585858"/>
<rect x="532.0999999999999" y="320.77" width="42.80" height="15.00" fill="#a8a8a8"/>
<rect x="531.3" y="343.56" width="44.60" height="16.80" fill="#fafafa"/>
<rect x="531.3" y="343.56" width="43.60" height="15.80" fill="#585858"/>
<rect x="532.0999999999999" y="344.36" width="42.80" height="15.00" fill="#a8a8a8"/>
<rect x="531.3" y="367.14" width="44.60" height="16.80" fill="#fafafa"/>
<rect x="531.3" y="367.14" width="43.60" height="15.80" fill="#585858"/>
<rect x="532.0999999999999" y="367.94" width="42.80" height="15.00" fill="#a8a8a8"/>
<rect x="531.3" y="390.73" width="44.60" height="16.80" fill="#fafafa"/>
<rect x="531.3" y="390.73" width="43.60" height="15.80" fill="#585858"/>
<rect x="532.0999999999999" y="391.53" width="42.80" height="15.00" fill="#000"/>
</svg>
<span class="tl" style="left:39.3px;top:35.0px">00:10</span>
<span class="tl" style="left:97.3px;top:35.0px">00:20</span>
<span class="tl" style="left:156.6px;top:35.0px">00:30</span>
<span class="tl" style="left:213.2px;top:35.0px">00:40</span>
<span class="tl" style="left:272.3px;top:35.0px">00:50</span>
<span class="tl" style="left:331.1px;top:35.0px">01:00</span>
<span class="tl" style="left:387.0px;top:35.0px">01:10</span>
<span class="tl" style="left:446.3px;top:35.0px">01:20</span>
<svg class="abs" style="left:214px;top:36px;mix-blend-mode:difference" width="6" height="414" viewBox="214 36 6 414"><rect x="216.85" y="39" width="0.9" height="410.0" fill="#c8c8c8"/></svg>
<div class="bx" style="top:60.8px"><span class="seg" style="color:#12a050">13<span class="dp">.</span>1</span></div>
<span class="f8 lb" style="left:576.0px;top:59.1px;color:#000;">Uб</span>
<span class="f8 lb2" style="left:576.0px;top:67.1px;color:#6c6c6c;">В</span>
<div class="bx" style="top:108.0px"><span class="seg" style="color:#3fe03f">2281</span></div>
<span class="f8 lb" style="left:576.0px;top:106.3px;color:#000;">N</span>
<span class="f8 lb2" style="left:576.0px;top:114.3px;color:#6c6c6c;">об/мн</span>
<div class="bx" style="top:131.6px"><span class="seg" style="color:#f2c896">4<span class="dp">.</span>60</span></div>
<span class="f8 lb" style="left:576.0px;top:129.9px;color:#000;">Ti</span>
<span class="f8 lb2" style="left:576.0px;top:137.9px;color:#6c6c6c;">мs</span>
<div class="bx" style="top:155.2px"><span class="seg" style="color:#38d8e0">381</span></div>
<span class="f8 lb" style="left:576.0px;top:153.5px;color:#000;">Pk</span>
<span class="f8 lb2" style="left:576.0px;top:161.5px;color:#6c6c6c;">мрс</span>
<div class="bx" style="top:202.3px"><span class="seg" style="color:#ee4848">7<span class="dp">.</span>0</span></div>
<span class="f8 lb" style="left:576.0px;top:200.6px;color:#000;">Fдр</span>
<span class="f8 lb2" style="left:576.0px;top:208.6px;color:#6c6c6c;">%</span>
<div class="bx" style="top:225.9px"><span class="seg" style="color:#f0f020">359</span></div>
<span class="f8 lb" style="left:576.0px;top:224.2px;color:#000;">Gt</span>
<span class="f8 lb2" style="left:576.0px;top:232.2px;color:#6c6c6c;">уе</span>
<div class="bx" style="top:273.1px"><span class="seg" style="color:#20b020">65</span></div>
<span class="f8 lb" style="left:576.0px;top:271.4px;color:#000;">XXз</span>
<span class="f8 lb2" style="left:576.0px;top:279.4px;color:#6c6c6c;">ш</span>
<div class="bx" style="top:296.7px"><span class="seg" style="color:#f0f0f0">0</span></div>
<span class="f8 lb" style="left:576.0px;top:295.0px;color:#000;">Gдоб</span>
<span class="f8 lb2" style="left:576.0px;top:303.0px;color:#6c6c6c;">уе</span>
<div class="bx" style="top:391.0px"><span class="seg" style="color:#a0b0f4">60</span></div>
<span class="f8 lb" style="left:576.0px;top:389.3px;color:#000;">Va</span>
<span class="f8 lb2" style="left:576.0px;top:397.3px;color:#6c6c6c;">км/ч</span>
<span class="timer" style="left:531.2px;top:410.0px">00:00:37.00</span>
<svg class="abs" style="left:531px;top:422.5px" width="9" height="9" viewBox="0 0 9 9"><circle cx="4.75" cy="4.75" r="2.9" fill="none" stroke="#f0f0f0" stroke-width="0.9"/><circle cx="4.3" cy="4.3" r="2.9" fill="none" stroke="#4a4a4a" stroke-width="0.9"/><circle cx="4.5" cy="4.5" r="2.5" fill="#a4a4a4"/></svg>
<span class="f8 rl" style="left:541.6px;top:421.6px;color:#000;">ХХ</span>
<svg class="abs" style="left:531px;top:432.3px" width="9" height="9" viewBox="0 0 9 9"><circle cx="4.75" cy="4.75" r="2.9" fill="none" stroke="#f0f0f0" stroke-width="0.9"/><circle cx="4.3" cy="4.3" r="2.9" fill="none" stroke="#4a4a4a" stroke-width="0.9"/><circle cx="4.5" cy="4.5" r="2.5" fill="#a4a4a4"/></svg>
<span class="f8 rl" style="left:541.6px;top:431.4px;color:#000;">ЭПХХ</span>
<svg class="abs" style="left:531px;top:442.1px" width="9" height="9" viewBox="0 0 9 9"><circle cx="4.5" cy="4.5" r="3.3" fill="#f6f62e"/></svg>
<span class="f8 rl" style="left:541.6px;top:441.2px;color:#000;">Приоткр</span>
<svg class="abs" style="left:531px;top:451.9px" width="9" height="9" viewBox="0 0 9 9"><circle cx="4.75" cy="4.75" r="2.9" fill="none" stroke="#f0f0f0" stroke-width="0.9"/><circle cx="4.3" cy="4.3" r="2.9" fill="none" stroke="#4a4a4a" stroke-width="0.9"/><circle cx="4.5" cy="4.5" r="2.5" fill="#a4a4a4"/></svg>
<span class="f8 rl" style="left:541.6px;top:451.0px;color:#000;">УН</span>
<svg class="abs" style="left:531px;top:461.7px" width="9" height="9" viewBox="0 0 9 9"><circle cx="4.75" cy="4.75" r="2.9" fill="none" stroke="#f0f0f0" stroke-width="0.9"/><circle cx="4.3" cy="4.3" r="2.9" fill="none" stroke="#4a4a4a" stroke-width="0.9"/><circle cx="4.5" cy="4.5" r="2.5" fill="#a4a4a4"/></svg>
<span class="f8 rl" style="left:541.6px;top:460.8px;color:#000;">Детон</span>
<div class="reddot"></div>
<div class="btn" style="left:7px;top:451px;width:33px;height:10px"></div>
<span class="f8" style="left:13.4px;top:450.0px;color:#000;">Файл</span>
<svg class="abs" style="left:38px;top:448px" width="12" height="16" viewBox="38 448 12 16"><polygon points="41.2,451.2 47.4,457.4 43.6,458.6 41.2,462.2" fill="#555"/><polygon points="40.4,450.2 46.6,456.6 43,457.8 40.4,461.2" fill="#fff"/></svg>
<span class="f8" style="left:52px;top:450.4px;color:#1c1cc8;">09-08-60.dyn</span>
<div class="abs" style="left:131.2px;top:454px;width:10px;height:1.1px;background:#111"></div>
<div class="sb"></div><div class="sbe"></div>
<div class="btn" style="left:330.7px;top:451.2px;width:29.6px;height:9px"></div>
<div class="abs" style="left:341px;top:455px;width:12px;height:1.6px;background:#222"></div>
<svg class="abs" style="left:340px;top:446px" width="14" height="12" viewBox="340 446 14 12"><polygon points="342.4,448.4 342.4,456.2 350.6,454.4" fill="#fff"/></svg>
<div class="btn" style="left:368px;top:451.2px;width:30.4px;height:9px"></div>
<span class="f8" style="left:380.6px;top:450.0px;color:#000;">+</span>
<div class="abs" style="left:397.5px;top:449.3px;width:8.5px;height:1.3px;background:#111"></div>
<span class="f8" style="left:424.2px;top:450.5px;color:#1c1cc8;">Процесс:</span>
<div class="key" style="left:4.5px;width:15.3px"></div>
<span class="f8" style="left:6.4px;top:466.1px;color:#000;">F1</span>
<span class="f8" style="left:21.4px;top:466.1px;color:#000;">Help</span>
<div class="key" style="left:57.8px;width:15.3px"></div>
<span class="f8" style="left:59.7px;top:466.1px;color:#000;">F2</span>
<span class="f8" style="left:74.7px;top:466.1px;color:#000;">Очист</span>
<div class="key" style="left:111.1px;width:15.3px"></div>
<span class="f8" style="left:113.0px;top:466.1px;color:#000;">F3</span>
<span class="f8" style="left:128.0px;top:466.1px;color:#000;">Настр</span>
<div class="key" style="left:164.4px;width:15.3px"></div>
<span class="f8" style="left:166.3px;top:466.1px;color:#000;">F4</span>
<span class="f8" style="left:181.3px;top:466.1px;color:#000;">Запис</span>
<div class="key" style="left:217.7px;width:15.3px"></div>
<span class="f8" style="left:219.6px;top:466.1px;color:#000;">F5</span>
<span class="f8" style="left:234.6px;top:466.1px;color:#000;">Вывод</span>
<div class="key" style="left:271.0px;width:15.3px"></div>
<span class="f8" style="left:272.9px;top:466.1px;color:#000;">F6</span>
<span class="f8" style="left:287.9px;top:466.1px;color:#000;">Выбор</span>
<div class="key" style="left:324.3px;width:15.3px"></div>
<span class="f8" style="left:326.2px;top:466.1px;color:#000;">F7</span>
<span class="f8" style="left:341.2px;top:466.1px;color:#000;">Шаблн</span>
<div class="key" style="left:377.6px;width:15.3px"></div>
<span class="f8" style="left:379.5px;top:466.1px;color:#000;">F8</span>
<span class="f8" style="left:394.5px;top:466.1px;color:#000;">Файл</span>
<div class="key" style="left:430.9px;width:15.3px"></div>
<span class="f8" style="left:432.8px;top:466.1px;color:#000;">F9</span>
<span class="f8" style="left:447.8px;top:466.1px;color:#000;">Остан</span>
<div class="key" style="left:482.2px;width:23.0px"></div>
<span class="f8" style="left:484.1px;top:466.1px;color:#000;">F10</span>
<span class="f8" style="left:506.8px;top:466.1px;color:#000;">Назад</span>
</div>
</body></html>
